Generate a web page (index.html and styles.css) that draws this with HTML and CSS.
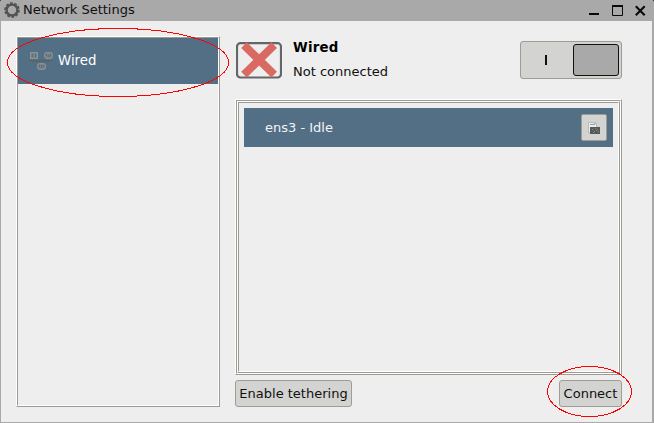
FILE: index.html
```html
<!DOCTYPE html>
<html lang="en">
<head>
<meta charset="utf-8">
<title>Network Settings</title>
<link rel="stylesheet" href="styles.css">
</head>
<body>
<div class="window">
  <header class="titlebar">
    <svg class="gear" width="16" height="16" viewBox="0 0 16 16">
      <circle cx="8" cy="8" r="6.9" fill="none" stroke="#505352" stroke-width="1.8" stroke-dasharray="2.7 1.63"/>
      <circle cx="8" cy="8" r="5.4" fill="none" stroke="#505352" stroke-width="2.3"/>
    </svg>
    <h1 class="title">Network Settings</h1>
    <svg class="controls" width="60" height="14" viewBox="0 0 60 14" fill="none" stroke="#0a0a0a">
      <path d="M1 10H11" stroke-width="2"/>
      <path d="M24.5 1.5V11.5H34.5V1.5" stroke-width="1"/>
      <path d="M24 2H35" stroke-width="2"/>
      <path d="M47.8 2.3L56.7 11.2M56.7 2.3L47.8 11.2" stroke-width="2.1"/>
    </svg>
  </header>
  <main class="content">
    <nav class="sunken sidebar">
      <div class="sunken-inner">
        <div class="nav-item">
          <svg width="24" height="18" viewBox="0 0 24 18" fill="none">
            <g fill="#77838a" stroke="#8d9293">
              <rect x="1.5" y=".5" width="7" height="6"/>
              <rect x="15.5" y=".5" width="8" height="6" rx="2"/>
              <rect x="8.5" y="11.5" width="8" height="6" rx="2"/>
            </g>
            <path d="M3.5 2v3M6.5 2v3M17.5 2v2M19.5 3v2M21.5 2v3M10.5 13v2M12.5 13v3M14.5 13v2" stroke="#586c79"/>
            <path d="M1 8.5H24M3 9.5H22" stroke="#59605f" stroke-dasharray="2 1"/>
          </svg>
          <span>Wired</span>
        </div>
      </div>
    </nav>
    <section class="details">
      <div class="summary">
        <svg class="status" width="46" height="37" viewBox="0 0 46 37" fill="none">
          <rect x="1" y="1.2" width="44" height="34.3" rx="3.5" stroke="#626668" stroke-width="2.2"/>
          <path d="M8 3.2L38.2 32.6M38.2 3.2L8 32.6" stroke="#d96a62" stroke-width="8"/>
        </svg>
        <div class="summary-text">
          <strong>Wired</strong>
          <span>Not connected</span>
        </div>
        <div class="switch"><span class="mark"></span><span class="knob"></span></div>
      </div>
      <div class="sunken list">
        <div class="sunken-inner">
          <div class="sunken">
            <div class="sunken-inner list-body">
              <div class="row">
                <span>ens3 - Idle</span>
                <button class="icon-button" aria-label="Configure">
                  <svg width="14" height="14" viewBox="0 0 14 14" shape-rendering="crispEdges">
                    <path d="M1 1H8L10 3V12H1Z" fill="#b4bdbe"/>
                    <path d="M2 2H7V3H9V11H2Z" fill="#edeeee"/>
                    <path d="M3 3H8V4H3Z" fill="#9a9a94"/>
                    <path d="M3 6H13V13H3Z" fill="#565a59"/>
                    <path d="M5 8h1v1h-1zM8 7h1v1h-1zM10 8h1v1h-1zM7 10h1v1h-1zM9 9h1v1h-1zM11 10h1v1h-1zM6 11h1v1h-1z" fill="#858887"/>
                  </svg>
                </button>
              </div>
            </div>
          </div>
        </div>
      </div>
      <div class="actions">
        <button class="button tether">Enable tethering</button>
        <button class="button connect">Connect</button>
      </div>
    </section>
  </main>
  <svg class="highlights" width="654" height="423" viewBox="0 0 654 423" fill="none" stroke="#f00" shape-rendering="crispEdges">
    <ellipse cx="118" cy="62.5" rx="110.5" ry="34"/>
    <ellipse cx="589.5" cy="391.5" rx="42" ry="25"/>
  </svg>
</div>
</body>
</html>
```

FILE: styles.css
```css
* { box-sizing: border-box; }

body {
  margin: 0;
  background: #000;
  font: 13px/16px "DejaVu Sans", sans-serif;
  color: #101010;
}

svg { display: block; flex: none; }

.window {
  position: relative;
  width: 654px;
  height: 423px;
  display: flex;
  flex-direction: column;
  background: #eee;
  border: solid #a9a9a9;
  border-width: 0 2px 1px 1px;
  border-radius: 2px 2px 0 0;
}

.titlebar {
  height: 21px;
  display: flex;
  align-items: flex-start;
  background: #a9a9a9;
  padding: 2px 4px 0 3px;
}

.title {
  flex: 1;
  margin: 0 0 0 3px;
  font-size: 13px;
  font-weight: 400;
  line-height: 16px;
}

.controls { margin-top: 2px; }

.content {
  flex: 1;
  display: grid;
  grid-template-columns: 204px 387px;
  column-gap: 15px;
  padding: 15px 0 15px 15px;
}

.sunken {
  display: flex;
  border: 1px solid;
  border-color: #fff #9d9a93 #9d9a93 #fff;
}

.sunken-inner {
  flex: 1;
  display: flex;
  border: 1px solid;
  border-color: #9d9a93 #fff #fff #9d9a93;
}

.sunken-inner > .sunken { flex: 1; }

.nav-item {
  flex: 1;
  height: 46px;
  display: flex;
  align-items: center;
  gap: 5px;
  padding-left: 11px;
  background: #526f86;
  color: #fff;
  font-size: 13.33px;
}

.details {
  display: flex;
  flex-direction: column;
}

.summary {
  height: 63px;
  display: flex;
  align-items: flex-start;
}

.status { margin: 6px 0 0 1px; }

.summary-text {
  flex: 1;
  display: flex;
  flex-direction: column;
  gap: 8px;
  padding: 4px 0 0 11px;
}

.summary-text strong {
  color: #000;
  font-size: 13.33px;
  letter-spacing: 0.2px;
}

.switch {
  width: 102px;
  height: 38px;
  margin-top: 5px;
  display: grid;
  grid-template-columns: 1fr 46px;
  align-items: center;
  padding: 2px;
  border: 1px solid #9d9d94;
  border-radius: 3px;
  background: #d3d3d1;
}

.mark {
  width: 2px;
  height: 10px;
  margin-left: 22px;
  background: #101010;
}

.knob {
  height: 32px;
  border: 1px solid #101010;
  border-radius: 3px;
  background: #a9a9a9;
}

.list { height: 276px; }

.list-body { padding: 5px; }

.row {
  flex: 1;
  height: 39px;
  display: flex;
  align-items: center;
  justify-content: space-between;
  padding: 0 6px 0 21px;
  background: #526f86;
  color: #f4f4f4;
}

.button,
.icon-button {
  padding: 0;
  border: 1px solid #9d9d94;
  border-radius: 3px;
  background: #d3d3d1;
  color: #101010;
  font: inherit;
}

.icon-button {
  width: 26px;
  height: 27px;
  display: grid;
  place-items: center;
  border-radius: 2px;
}

.actions {
  display: flex;
  justify-content: space-between;
  padding-top: 5px;
}

.button { height: 27px; white-space: nowrap; }
.tether { width: 117px; }
.connect { width: 63px; }

.highlights {
  position: absolute;
  top: 0;
  left: -1px;
}
```
